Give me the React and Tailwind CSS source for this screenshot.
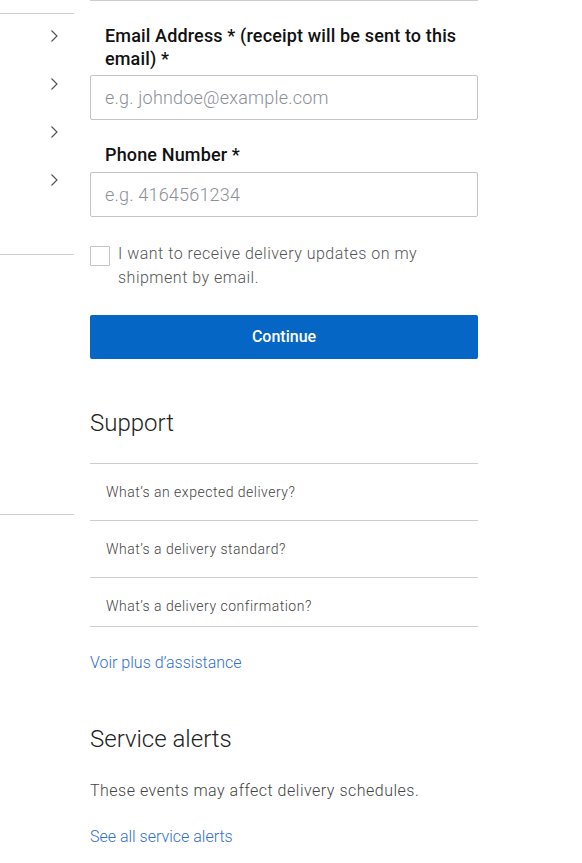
import React from 'react';

const navItems = ['Track', 'Receive', 'Manage', 'Redirect'];

const supportLinks = [
  "What’s an expected delivery?",
  "What’s a delivery standard?",
  "What’s a delivery confirmation?",
];

const Chevron = () => (
  <svg width="8" height="14" viewBox="0 0 8 14" fill="none" stroke="#555" strokeWidth="1.2">
    <path d="M1.5 1.5 L7 7 L1.5 12.5" />
  </svg>
);

export default function App() {
  return (
    <div className="min-h-screen bg-white flex gap-4 font-['Roboto',sans-serif]">
      {/* Side nav */}
      <aside className="w-[74px] shrink-0">
        <div className="mt-[13px] border-t border-[#cccccc]">
          {navItems.map((item) => (
            <div key={item} className="h-12 pb-[4px] flex items-center justify-end pr-[16px]" aria-label={item}>
              <Chevron />
            </div>
          ))}
          <div className="h-[48px]" />
        </div>
        <div className="border-t border-[#cccccc] h-[260px]" />
        <div className="border-t border-[#cccccc]" />
      </aside>

      {/* Main */}
      <main className="w-[388px] shrink-0 border-t border-[#cccccc] pt-[23px]">
        <label className="block px-[15px] text-[18px] leading-[23px] font-medium text-[#111] tracking-[0.15px]">
          Email Address * (receipt will be sent to this email) *
        </label>
        <input
          type="email"
          placeholder="e.g. johndoe@example.com"
          className="mt-[5px] w-full h-[45px] border border-[#c4c4c4] rounded-[2px] px-[14px] text-[18px] font-light tracking-[0.2px] text-[#333] placeholder:text-[#8b8f98] outline-none"
        />

        <label className="block mt-[23px] px-[15px] text-[18px] leading-[23px] font-medium text-[#111] tracking-[0.15px]">
          Phone Number *
        </label>
        <input
          type="tel"
          placeholder="e.g. 4164561234"
          className="mt-[6px] w-full h-[45px] border border-[#c4c4c4] rounded-[2px] px-[14px] text-[18px] font-light tracking-[0.2px] text-[#333] placeholder:text-[#8b8f98] outline-none"
        />

        <div className="mt-[24px] flex items-start gap-[8px]">
          <span className="mt-[5px] w-5 h-5 shrink-0 border border-[#c4c4c4] rounded-[1px] bg-white" />
          <p className="pt-[1px] pr-[40px] text-[16px] leading-[24px] font-light text-[#555] tracking-[0.5px]">
            I want to receive delivery updates on my shipment by email.
          </p>
        </div>

        <button className="mt-[25px] w-full h-[44px] bg-[#0566c6] rounded-[2px] text-white text-[16px] font-medium">
          Continue
        </button>

        <h2 className="mt-[48px] text-[24px] leading-[32px] font-light text-[#222]">Support</h2>
        <ul className="mt-[24px] border-t border-[#cccccc]">
          {supportLinks.map((q, i) => (
            <li
              key={q}
              className={`border-b border-[#cccccc] px-[16px] pt-[16px] text-[14px] leading-[24px] font-light text-[#444] tracking-[0.5px] ${
                i === 2 ? 'h-[49px]' : 'h-[57px]'
              }`}
            >
              {q}
            </li>
          ))}
        </ul>
        <a href="#" className="block mt-[24px] text-[16px] leading-[24px] font-light text-[#2f6fd0]">
          Voir plus d’assistance
        </a>

        <h2 className="mt-[48px] text-[24px] leading-[32px] font-light text-[#222]">Service alerts</h2>
        <p className="mt-[24px] text-[16px] leading-[24px] font-light text-[#444] tracking-[0.5px]">
          These events may affect delivery schedules.
        </p>
        <a href="#" className="block mt-[22px] text-[16px] leading-[24px] font-light text-[#2f6fd0]">
          See all service alerts
        </a>
      </main>
    </div>
  );
}
